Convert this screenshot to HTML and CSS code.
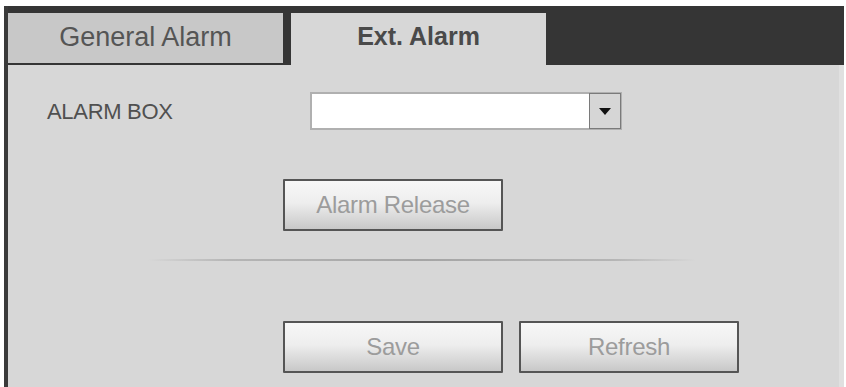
FILE: index.html
```html
<!DOCTYPE html>
<html>
<head>
<meta charset="utf-8">
<link rel="stylesheet" href="styles.css">
</head>
<body>
<div class="frame">
  <div class="tabs">
    <div class="tab tab-general">General Alarm</div>
    <div class="tab tab-ext">Ext. Alarm</div>
  </div>
  <div class="panel">
    <div class="row">
      <div class="label">ALARM BOX</div>
      <div class="select">
        <div class="select-field"></div>
        <div class="select-btn">
          <svg width="12" height="7" viewBox="0 0 12 7"><polygon points="0,0 12,0 6,7" fill="#111"/></svg>
        </div>
      </div>
    </div>
    <div class="row-release">
      <button class="btn">Alarm Release</button>
    </div>
    <div class="divider"></div>
    <div class="row-actions">
      <button class="btn">Save</button>
      <button class="btn">Refresh</button>
    </div>
  </div>
</div>
</body>
</html>
```

FILE: styles.css
```css
html, body {
  margin: 0;
  padding: 0;
  background: #ffffff;
  height: 100%;
}
body {
  font-family: "Liberation Sans", Arial, sans-serif;
  overflow: hidden;
}
.frame {
  margin: 6px 2px 0 4px;
  border-left: 4px solid #3a3a3a;
  height: calc(100% - 6px);
  display: flex;
  flex-direction: column;
}
.tabs {
  display: flex;
  align-items: flex-start;
  gap: 8px;
  background: #353535;
  height: 59px;
  padding-top: 7px;
  box-sizing: border-box;
}
.tab {
  display: flex;
  align-items: center;
  justify-content: center;
  box-sizing: border-box;
  color: #555;
}
.tab-general {
  width: 275px;
  height: 50px;
  background: #c8c8c8;
  font-size: 27px;
  padding-bottom: 2px;
}
.tab-ext {
  width: 255px;
  height: 52px;
  background: #d7d7d7;
  font-size: 25px;
  font-weight: bold;
  color: #4a4a4a;
  padding-bottom: 6px;
}
.panel {
  flex: 1;
  background: #d7d7d7;
  padding-top: 27px;
  border-right: 5px solid #e0e0e0;
}
.row {
  display: flex;
  align-items: center;
  height: 38px;
}
.label {
  width: 263px;
  padding-left: 39px;
  font-size: 22px;
  color: #505050;
  letter-spacing: -0.3px;
  padding-top: 2px;
}
.select {
  display: flex;
  width: 312px;
  height: 38px;
  box-sizing: border-box;
  border: 2px solid #b0b0b0;
  background: #fff;
}
.select-field {
  flex: 1;
}
.select-btn {
  width: 32px;
  background: #d6d6d6;
  border: 1px solid #7a7a7a;
  display: flex;
  align-items: center;
  justify-content: center;
  box-sizing: border-box;
  margin: -1px -1px -1px 0;
}
.row-release {
  margin-top: 49px;
  padding-left: 275px;
  display: flex;
}
.btn {
  width: 220px;
  height: 52px;
  box-sizing: border-box;
  border: 2px solid #555;
  border-radius: 1px;
  background: linear-gradient(#f7f7f7 0%, #eeeeee 45%, #c8c8c8 100%);
  color: #9c9c9c;
  font-family: "Liberation Sans", Arial, sans-serif;
  font-size: 24px;
  padding: 0;
  letter-spacing: -0.3px;
}
.divider {
  margin: 28px 0 0 140px;
  width: 548px;
  height: 2px;
  background: linear-gradient(90deg, rgba(170,170,170,0) 0%, #b5b5b5 15%, #a5a5a5 50%, #b5b5b5 85%, rgba(170,170,170,0) 100%);
}
.row-actions {
  margin-top: 60px;
  padding-left: 275px;
  display: flex;
  gap: 16px;
}
```
